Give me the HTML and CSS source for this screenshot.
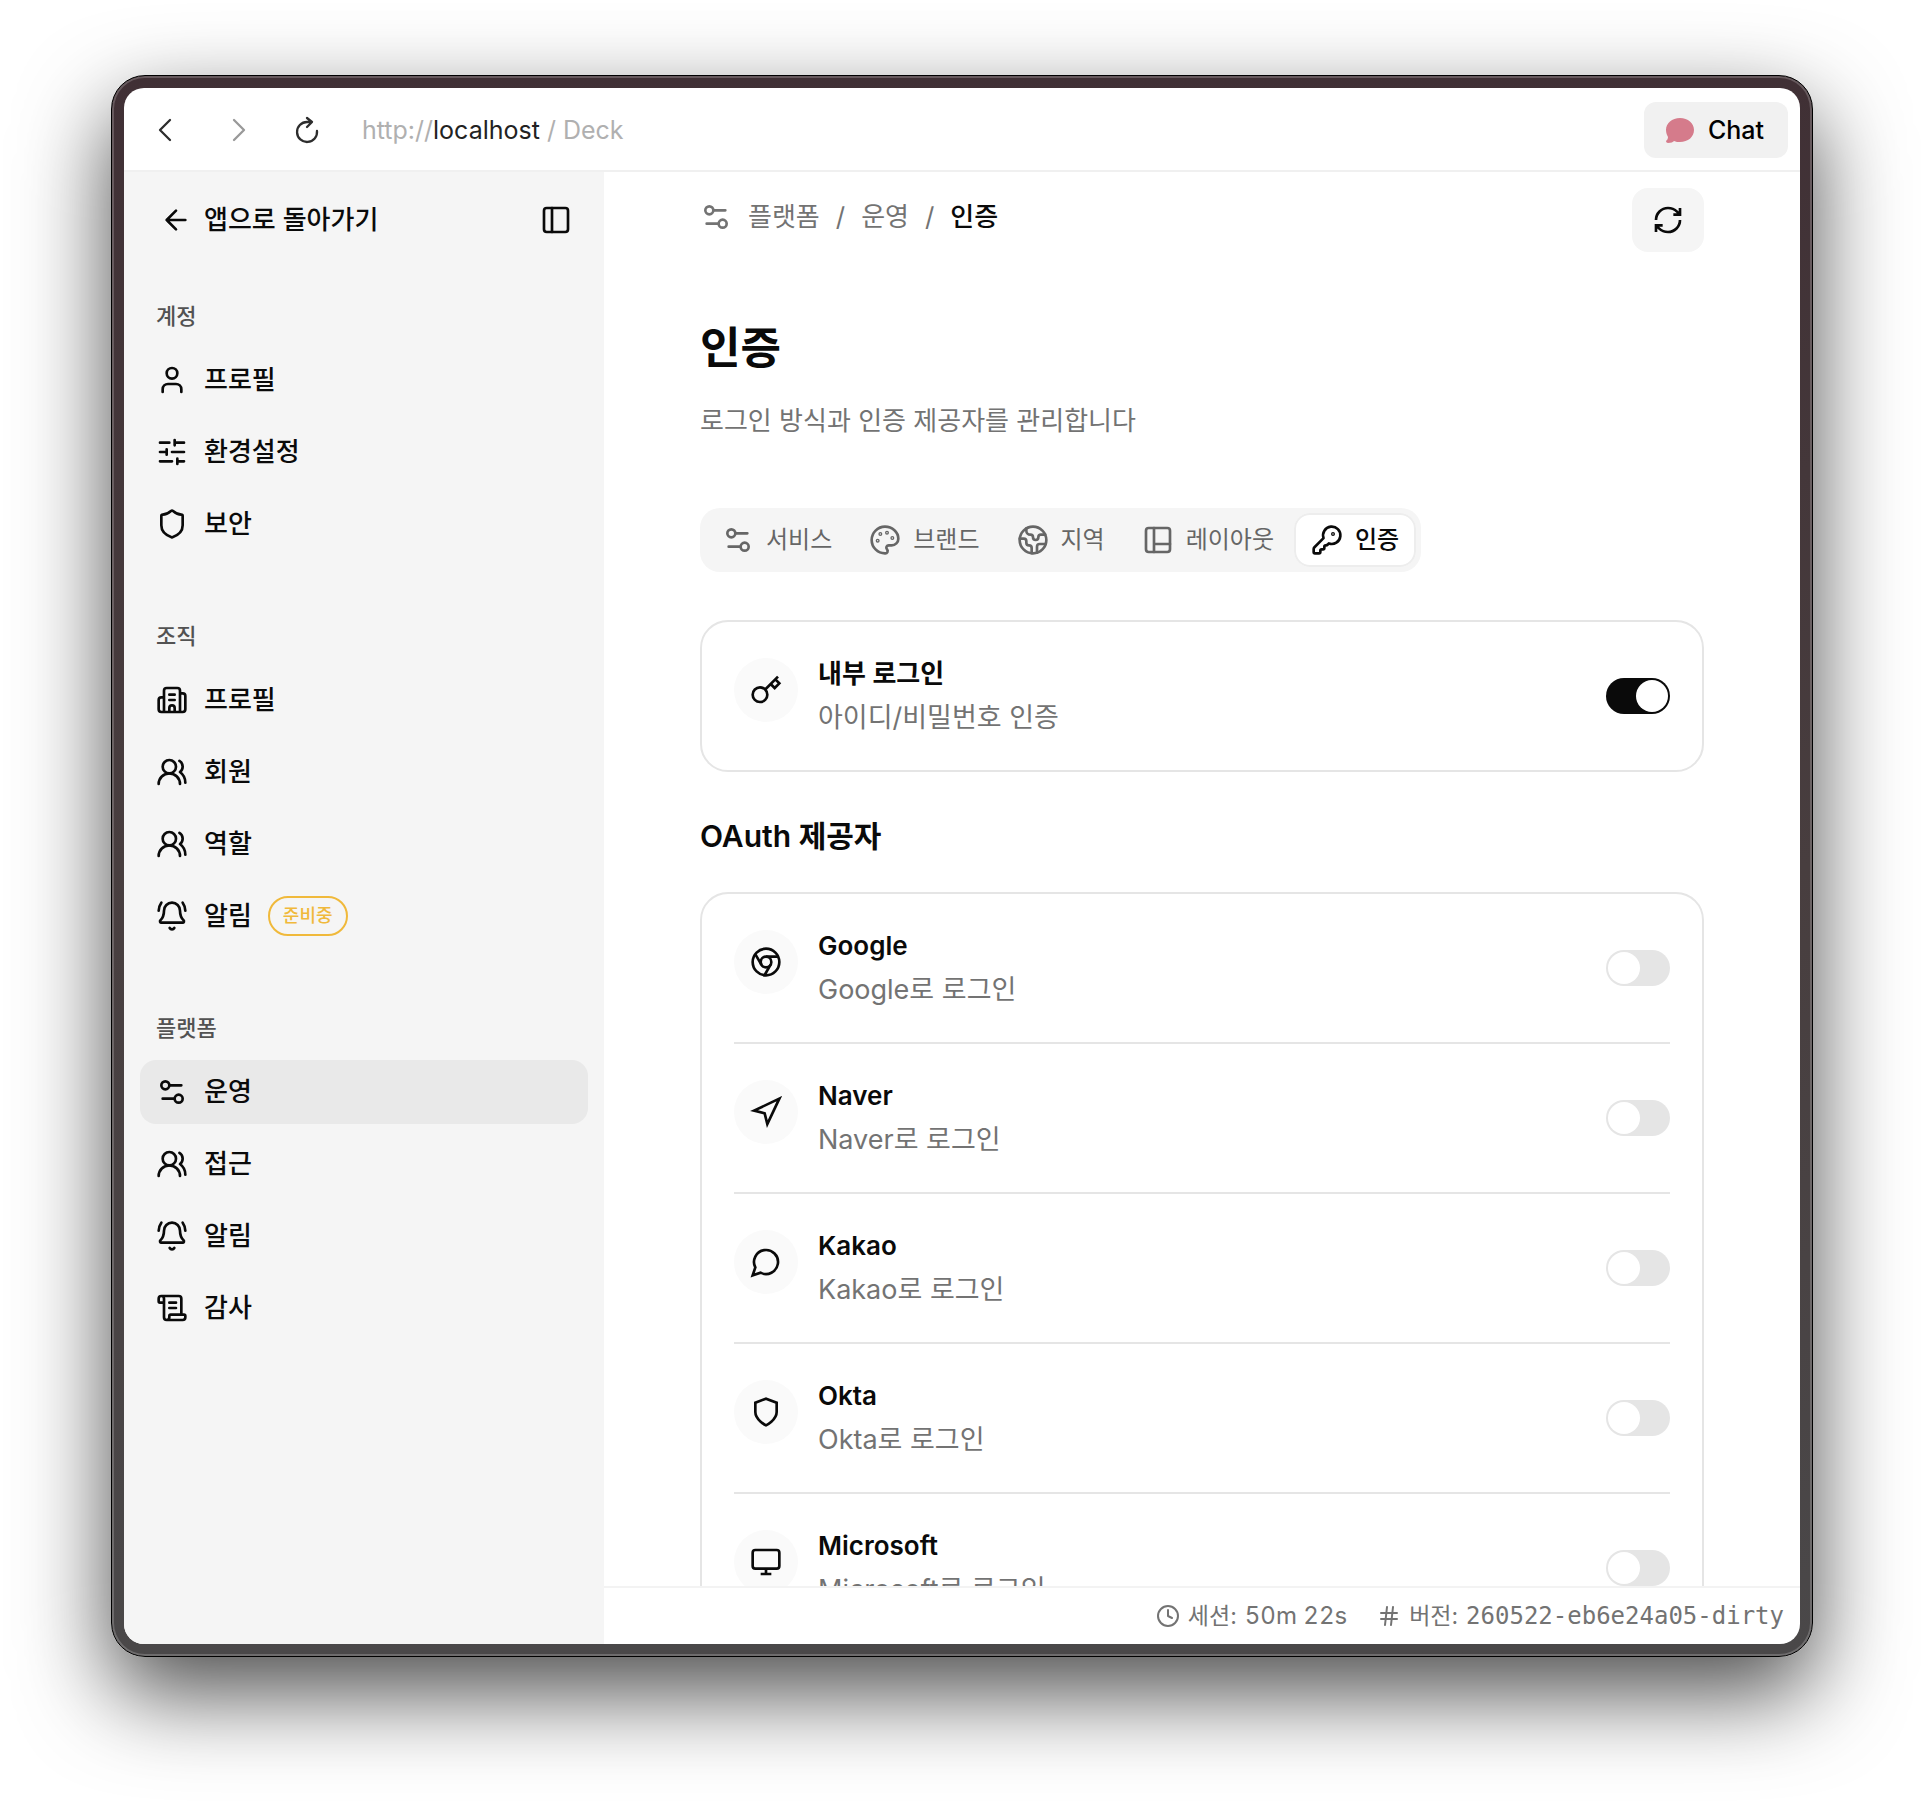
FILE: index.html
```html
<!DOCTYPE html>
<html lang="ko">
<head>
<meta charset="utf-8">
<meta name="viewport" content="width=device-width, initial-scale=1">
<title>Deck</title>
<link rel="stylesheet" href="styles.css">
</head>
<body>
<svg class="sprite" aria-hidden="true">
  <symbol id="i-arrow-left" viewBox="0 0 24 24"><path d="m12 19-7-7 7-7M19 12H5"/></symbol>
  <symbol id="i-panel" viewBox="0 0 24 24"><rect x="3" y="3" width="18" height="18" rx="2"/><path d="M9 3v18"/></symbol>
  <symbol id="i-user" viewBox="0 0 24 24"><path d="M19 21v-2a4 4 0 0 0-4-4H9a4 4 0 0 0-4 4v2"/><circle cx="12" cy="7" r="4"/></symbol>
  <symbol id="i-sliders" viewBox="0 0 24 24"><path d="M10 5H3M12 19H3M14 3v4M16 17v4M21 12h-9M21 19h-5M21 5h-7M8 10v4M8 12H3"/></symbol>
  <symbol id="i-shield" viewBox="0 0 24 24"><path d="M20 13c0 5-3.5 7.5-7.66 8.95a1 1 0 0 1-.67-.01C7.5 20.5 4 18 4 13V6a1 1 0 0 1 1-1c2 0 4.5-1.2 6.24-2.72a1.17 1.17 0 0 1 1.52 0C14.51 3.81 17 5 19 5a1 1 0 0 1 1 1z"/></symbol>
  <symbol id="i-building" viewBox="0 0 24 24"><path d="M10 12h4M10 8h4M14 21v-3a2 2 0 0 0-4 0v3M6 10H4a2 2 0 0 0-2 2v7a2 2 0 0 0 2 2h16a2 2 0 0 0 2-2V9a2 2 0 0 0-2-2h-2M6 21V5a2 2 0 0 1 2-2h8a2 2 0 0 1 2 2v16"/></symbol>
  <symbol id="i-users" viewBox="0 0 24 24"><path d="M18 21a8 8 0 0 0-16 0"/><circle cx="10" cy="8" r="5"/><path d="M22 20c0-3.37-2-6.5-4-8a5 5 0 0 0-.45-8.3"/></symbol>
  <symbol id="i-bell" viewBox="0 0 24 24"><path d="M10.268 21a2 2 0 0 0 3.464 0M22 8c0-2.3-.8-4.3-2-6M3.262 15.326A1 1 0 0 0 4 17h16a1 1 0 0 0 .74-1.673C19.41 13.956 18 12.499 18 8A6 6 0 0 0 6 8c0 4.499-1.411 5.956-2.738 7.326M4 2C2.8 3.7 2 5.7 2 8"/></symbol>
  <symbol id="i-settings" viewBox="0 0 24 24"><path d="M14 17H5M19 7h-9"/><circle cx="17" cy="17" r="3"/><circle cx="7" cy="7" r="3"/></symbol>
  <symbol id="i-scroll" viewBox="0 0 24 24"><path d="M15 12h-5M15 8h-5M19 17V5a2 2 0 0 0-2-2H4M8 21h12a2 2 0 0 0 2-2v-1a1 1 0 0 0-1-1H11a1 1 0 0 0-1 1v1a2 2 0 1 1-4 0V5a2 2 0 1 0-4 0v2a1 1 0 0 0 1 1h3"/></symbol>
  <symbol id="i-palette" viewBox="0 0 24 24"><path d="M12 22a1 1 0 0 1 0-20 10 9 0 0 1 10 9 5 5 0 0 1-5 5h-2.25a1.75 1.75 0 0 0-1.4 2.8l.3.4a1.75 1.75 0 0 1-1.4 2.8z"/><circle cx="13.5" cy="6.5" r=".5"/><circle cx="17.5" cy="10.5" r=".5"/><circle cx="6.5" cy="12.5" r=".5"/><circle cx="8.5" cy="7.5" r=".5"/></symbol>
  <symbol id="i-earth" viewBox="0 0 24 24"><path d="M21.54 15H17a2 2 0 0 0-2 2v4.54M7 3.34V5a3 3 0 0 0 3 3 2 2 0 0 1 2 2c0 1.1.9 2 2 2a2 2 0 0 0 2-2c0-1.1.9-2 2-2h3.17M11 21.95V18a2 2 0 0 0-2-2 2 2 0 0 1-2-2v-1a2 2 0 0 0-2-2H2.05"/><circle cx="12" cy="12" r="10"/></symbol>
  <symbol id="i-layout" viewBox="0 0 24 24"><rect x="3" y="3" width="18" height="18" rx="2"/><path d="M9 3v18M9 15h12"/></symbol>
  <symbol id="i-key-round" viewBox="0 0 24 24"><path d="M2.586 17.414A2 2 0 0 0 2 18.828V21a1 1 0 0 0 1 1h3a1 1 0 0 0 1-1v-1a1 1 0 0 1 1-1h1a1 1 0 0 0 1-1v-1a1 1 0 0 1 1-1h.172a2 2 0 0 0 1.414-.586l.814-.814a6.5 6.5 0 1 0-4-4z"/><circle cx="16.5" cy="7.5" r=".5"/></symbol>
  <symbol id="i-key" viewBox="0 0 24 24"><path d="m15.5 7.5 3 3L22 7l-3-3M21 2l-9.6 9.6"/><circle cx="7.5" cy="15.5" r="5.5"/></symbol>
  <symbol id="i-refresh" viewBox="0 0 24 24"><path d="M3 12a9 9 0 0 1 9-9 9.75 9.75 0 0 1 6.74 2.74L21 8M21 3v5h-5M21 12a9 9 0 0 1-9 9 9.75 9.75 0 0 1-6.74-2.74L3 16M8 16H3v5"/></symbol>
  <symbol id="i-chrome" viewBox="0 0 24 24"><circle cx="12" cy="12" r="10"/><circle cx="12" cy="12" r="4"/><path d="M21.17 8H12M3.95 6.06 8.54 14M10.88 21.94 15.46 14"/></symbol>
  <symbol id="i-navigation" viewBox="0 0 24 24"><path d="m3 11 19-9-9 19-2-8z"/></symbol>
  <symbol id="i-message" viewBox="0 0 24 24"><path d="M7.9 20A9 9 0 1 0 4 16.1L2 22Z"/></symbol>
  <symbol id="i-shield-sharp" viewBox="0 0 24 24"><path d="M12 22s8-4 8-10V5l-8-3-8 3v7c0 6 8 10 8 10z"/></symbol>
  <symbol id="i-monitor" viewBox="0 0 24 24"><rect x="2" y="3" width="20" height="14" rx="2"/><path d="M8 21h8M12 17v4"/></symbol>
  <symbol id="i-clock" viewBox="0 0 24 24"><circle cx="12" cy="12" r="10"/><path d="M12 6v6l4 2"/></symbol>
  <symbol id="i-hash" viewBox="0 0 24 24"><path d="M4 9h16M4 15h16M10 3 8 21M16 3l-2 18"/></symbol>
  <symbol id="i-chevron-left" viewBox="0 0 32 32"><path d="M21 6 11 16l10 10"/></symbol>
  <symbol id="i-chevron-right" viewBox="0 0 32 32"><path d="m14 6 10 10-10 10"/></symbol>
  <symbol id="i-reload" viewBox="0 0 32 32"><path d="M26 17a10 10 0 1 1-10-9h4M16 4l5 4-5 5"/></symbol>
  <symbol id="i-bubble" viewBox="0 0 32 32"><path d="M16 4C8 4 2 9 2 16c0 3 1 5 2 7 0 2-1 3-2 4 0 1 1 2 2 2 3 0 5-1 6-2 2 1 4 1 6 1 8 0 14-5 14-12S24 4 16 4z"/></symbol>
</svg>

<div class="window">
  <div class="screen">
    <header class="toolbar">
      <button class="tool" type="button" aria-label="뒤로"><svg class="icon"><use href="#i-chevron-left"/></svg></button>
      <button class="tool tool-off" type="button" aria-label="앞으로"><svg class="icon"><use href="#i-chevron-right"/></svg></button>
      <button class="tool" type="button" aria-label="새로 고침"><svg class="icon"><use href="#i-reload"/></svg></button>
      <p class="url">http://<span class="host">localhost</span> / Deck</p>
      <button class="chat" type="button"><svg class="icon bubble"><use href="#i-bubble"/></svg>Chat</button>
    </header>

    <div class="body">
      <aside class="sidebar">
        <div class="side-head">
          <a class="back" href="#"><svg class="icon"><use href="#i-arrow-left"/></svg>앱으로 돌아가기</a>
          <button class="collapse" type="button" aria-label="사이드바 접기"><svg class="icon"><use href="#i-panel"/></svg></button>
        </div>
        <nav class="groups">
          <section>
            <h2 class="group-label">계정</h2>
            <ul class="nav-list">
              <li><a class="nav-item" href="#"><svg class="icon"><use href="#i-user"/></svg>프로필</a></li>
              <li><a class="nav-item" href="#"><svg class="icon"><use href="#i-sliders"/></svg>환경설정</a></li>
              <li><a class="nav-item" href="#"><svg class="icon"><use href="#i-shield"/></svg>보안</a></li>
            </ul>
          </section>
          <section>
            <h2 class="group-label">조직</h2>
            <ul class="nav-list">
              <li><a class="nav-item" href="#"><svg class="icon"><use href="#i-building"/></svg>프로필</a></li>
              <li><a class="nav-item" href="#"><svg class="icon"><use href="#i-users"/></svg>회원</a></li>
              <li><a class="nav-item" href="#"><svg class="icon"><use href="#i-users"/></svg>역할</a></li>
              <li><a class="nav-item" href="#"><svg class="icon"><use href="#i-bell"/></svg>알림<span class="badge">준비중</span></a></li>
            </ul>
          </section>
          <section>
            <h2 class="group-label">플랫폼</h2>
            <ul class="nav-list">
              <li><a class="nav-item current" href="#" aria-current="page"><svg class="icon"><use href="#i-settings"/></svg>운영</a></li>
              <li><a class="nav-item" href="#"><svg class="icon"><use href="#i-users"/></svg>접근</a></li>
              <li><a class="nav-item" href="#"><svg class="icon"><use href="#i-bell"/></svg>알림</a></li>
              <li><a class="nav-item" href="#"><svg class="icon"><use href="#i-scroll"/></svg>감사</a></li>
            </ul>
          </section>
        </nav>
      </aside>

      <div class="pane">
        <main class="content">
          <div class="content-head">
            <nav class="crumbs" aria-label="경로">
              <svg class="icon"><use href="#i-settings"/></svg>
              <a href="#">플랫폼</a><span>/</span><a href="#">운영</a><span>/</span><span class="here">인증</span>
            </nav>
            <button class="refresh" type="button" aria-label="새로 고침"><svg class="icon sharp"><use href="#i-refresh"/></svg></button>
          </div>

          <h1>인증</h1>
          <p class="lead">로그인 방식과 인증 제공자를 관리합니다</p>

          <div class="tabs" role="tablist">
            <button class="tab" type="button" role="tab"><svg class="icon"><use href="#i-settings"/></svg>서비스</button>
            <button class="tab" type="button" role="tab"><svg class="icon"><use href="#i-palette"/></svg>브랜드</button>
            <button class="tab" type="button" role="tab"><svg class="icon"><use href="#i-earth"/></svg>지역</button>
            <button class="tab" type="button" role="tab"><svg class="icon"><use href="#i-layout"/></svg>레이아웃</button>
            <button class="tab active" type="button" role="tab" aria-selected="true"><svg class="icon"><use href="#i-key-round"/></svg>인증</button>
          </div>

          <div class="card">
            <div class="row">
              <span class="disc"><svg class="icon sharp"><use href="#i-key"/></svg></span>
              <label class="texts" for="sw-internal"><span class="name">내부 로그인</span><span class="desc">아이디/비밀번호 인증</span></label>
              <input class="switch" type="checkbox" id="sw-internal" checked>
            </div>
          </div>

          <h2 class="section-title">OAuth 제공자</h2>

          <div class="card">
            <div class="row">
              <span class="disc"><svg class="icon sharp"><use href="#i-chrome"/></svg></span>
              <label class="texts" for="sw-google"><span class="name">Google</span><span class="desc">Google로 로그인</span></label>
              <input class="switch" type="checkbox" id="sw-google">
            </div>
            <div class="row">
              <span class="disc"><svg class="icon sharp"><use href="#i-navigation"/></svg></span>
              <label class="texts" for="sw-naver"><span class="name">Naver</span><span class="desc">Naver로 로그인</span></label>
              <input class="switch" type="checkbox" id="sw-naver">
            </div>
            <div class="row">
              <span class="disc"><svg class="icon sharp"><use href="#i-message"/></svg></span>
              <label class="texts" for="sw-kakao"><span class="name">Kakao</span><span class="desc">Kakao로 로그인</span></label>
              <input class="switch" type="checkbox" id="sw-kakao">
            </div>
            <div class="row">
              <span class="disc"><svg class="icon sharp"><use href="#i-shield-sharp"/></svg></span>
              <label class="texts" for="sw-okta"><span class="name">Okta</span><span class="desc">Okta로 로그인</span></label>
              <input class="switch" type="checkbox" id="sw-okta">
            </div>
            <div class="row">
              <span class="disc"><svg class="icon sharp"><use href="#i-monitor"/></svg></span>
              <label class="texts" for="sw-microsoft"><span class="name">Microsoft</span><span class="desc">Microsoft로 로그인</span></label>
              <input class="switch" type="checkbox" id="sw-microsoft">
            </div>
          </div>
        </main>

        <footer class="status">
          <p class="stat"><svg class="icon small"><use href="#i-clock"/></svg>세션: <span class="value">50m 22s</span></p>
          <p class="stat"><svg class="icon small"><use href="#i-hash"/></svg>버전: <code class="mono">260522-eb6e24a05-dirty</code></p>
        </footer>
      </div>
    </div>
  </div>
</div>
</body>
</html>
```

FILE: styles.css
```css
:root {
  --ink: #0a0a0a;
  --muted: #737373;
  --line: #e5e5e5;
  --soft: #f5f5f5;
}

* {
  box-sizing: border-box;
}

body {
  display: flex;
  height: 100vh;
  margin: 0;
  padding: 75px 111px 147px;
  background: #fff;
  color: var(--ink);
  font: 400 26px/40px Inter, "Noto Sans CJK KR", sans-serif;
}

h1, h2, p, ul {
  margin: 0;
  padding: 0;
}

ul {
  list-style: none;
}

a {
  color: inherit;
  text-decoration: none;
}

button {
  padding: 0;
  border: 0;
  background: none;
  color: inherit;
  font: inherit;
}

.sprite {
  position: absolute;
  width: 0;
  height: 0;
}

.icon {
  flex: none;
  display: block;
  width: 32px;
  height: 32px;
  fill: none;
  stroke: currentColor;
  stroke-width: 2;
  stroke-linecap: round;
  stroke-linejoin: round;
}

.icon.sharp {
  stroke-linecap: butt;
  stroke-linejoin: miter;
}

.icon.small {
  width: 24px;
  height: 24px;
}

/* Window frame */

.window {
  flex: 1;
  display: flex;
  min-width: 0;
  padding: 12px;
  border: 1px solid #000;
  border-radius: 34px;
  background: linear-gradient(#403035, #483e3f 50%, #4a4849);
  box-shadow: inset 0 0 0 2px rgba(255, 255, 255, 0.2), 0 36px 90px rgba(0, 0, 0, 0.7);
}

.screen {
  flex: 1;
  display: flex;
  flex-direction: column;
  min-width: 0;
  overflow: hidden;
  border-radius: 20px;
  background: #fff;
}

.toolbar {
  flex: none;
  display: flex;
  align-items: center;
  height: 84px;
  padding: 2px 12px 0 25px;
  border-bottom: 2px solid #f0f0f0;
  color: #2d2d2d;
  font-size: 25px;
}

.tool {
  margin-right: 39px;
}

.tool .icon {
  stroke-width: 2.3;
}

.tool-off {
  color: #999;
}

.url {
  flex: 1;
  color: #b0b0b0;
}

.host {
  color: #222;
}

.chat {
  display: flex;
  align-items: center;
  gap: 12px;
  height: 56px;
  padding: 0 24px 0 20px;
  border-radius: 12px;
  background: #f1f1f1;
  color: #000;
  font-weight: 500;
}

.bubble {
  fill: #d57b8b;
  stroke: none;
}

.body {
  flex: 1;
  display: flex;
  min-height: 0;
}

/* Sidebar */

.sidebar {
  flex: none;
  width: 480px;
  padding: 16px;
  background: var(--soft);
  font-weight: 500;
}

.side-head {
  display: flex;
  align-items: center;
  justify-content: space-between;
  height: 64px;
  margin-bottom: 32px;
  padding: 0 16px 0 20px;
}

.back {
  display: flex;
  align-items: center;
  gap: 12px;
}

.groups {
  display: flex;
  flex-direction: column;
  gap: 48px;
}

.group-label {
  padding: 0 16px;
  color: #525252;
  font-size: 22px;
  font-weight: 500;
  line-height: 64px;
}

.nav-list {
  display: flex;
  flex-direction: column;
  gap: 8px;
}

.nav-item {
  display: flex;
  align-items: center;
  gap: 16px;
  height: 64px;
  padding: 0 16px;
  border-radius: 16px;
}

.current {
  background: #e9e9e9;
}

.badge {
  height: 40px;
  padding: 0 13px;
  border: 2px solid #f0b93b;
  border-radius: 20px;
  color: #f0b93b;
  font-size: 18px;
  line-height: 36px;
}

/* Main pane */

.pane {
  flex: 1;
  display: flex;
  flex-direction: column;
  min-width: 0;
}

.content {
  flex: 1;
  min-height: 0;
  overflow: hidden;
  padding: 16px 96px 0;
}

.content-head {
  display: flex;
  align-items: flex-start;
  justify-content: space-between;
  margin-bottom: 68px;
}

.crumbs {
  display: flex;
  align-items: center;
  gap: 16px;
  height: 58px;
  color: var(--muted);
}

.here {
  color: var(--ink);
  font-weight: 500;
}

.refresh {
  display: grid;
  place-items: center;
  width: 72px;
  height: 64px;
  border-radius: 16px;
  background: var(--soft);
}

h1 {
  margin-bottom: 25px;
  font-size: 44px;
  font-weight: 600;
  line-height: 56px;
}

.lead {
  margin-bottom: 67px;
  color: var(--muted);
}

.tabs {
  display: flex;
  gap: 3px;
  width: fit-content;
  margin-bottom: 48px;
  padding: 5px;
  border-radius: 20px;
  background: var(--soft);
}

.tab {
  display: flex;
  align-items: center;
  gap: 12px;
  height: 54px;
  padding: 0 17px;
  border-radius: 16px;
  color: #666;
  font-size: 24px;
}

.active {
  background: #fff;
  box-shadow: inset 0 0 0 2px #ededed;
  color: var(--ink);
  font-weight: 500;
}

.card {
  padding: 0 32px;
  border: 2px solid var(--line);
  border-radius: 28px;
}

.row {
  display: flex;
  align-items: center;
  gap: 20px;
  padding: 32px 0;
}

.row + .row {
  border-top: 2px solid var(--line);
}

.disc {
  align-self: flex-start;
  display: grid;
  place-items: center;
  width: 64px;
  height: 64px;
  margin-top: 4px;
  border-radius: 50%;
  background: #fafafa;
}

.texts {
  flex: 1;
  display: flex;
  flex-direction: column;
  gap: 4px;
}

.name {
  font-weight: 600;
}

.desc {
  color: var(--muted);
  font-size: 27px;
}

.switch {
  appearance: none;
  width: 64px;
  height: 36px;
  margin: 0;
  padding: 2px;
  border-radius: 18px;
  background: var(--line);
}

.switch::before {
  content: "";
  display: block;
  width: 32px;
  height: 32px;
  border-radius: 50%;
  background: #fff;
}

.switch:checked {
  background: var(--ink);
}

.switch:checked::before {
  margin-left: auto;
}

.section-title {
  margin: 40px 0 32px;
  font-size: 30px;
  font-weight: 600;
  line-height: 48px;
}

/* Status bar */

.status {
  flex: none;
  display: flex;
  align-items: center;
  justify-content: flex-end;
  gap: 30px;
  height: 58px;
  padding: 0 16px;
  border-top: 2px solid #f3f3f3;
  color: var(--muted);
  font-size: 23px;
}

.stat {
  display: flex;
  align-items: center;
  gap: 8px;
}

.value {
  font-size: 24px;
  font-variant-numeric: tabular-nums;
}

.mono {
  font: 24px/40px "DejaVu Sans Mono", monospace;
}
```
